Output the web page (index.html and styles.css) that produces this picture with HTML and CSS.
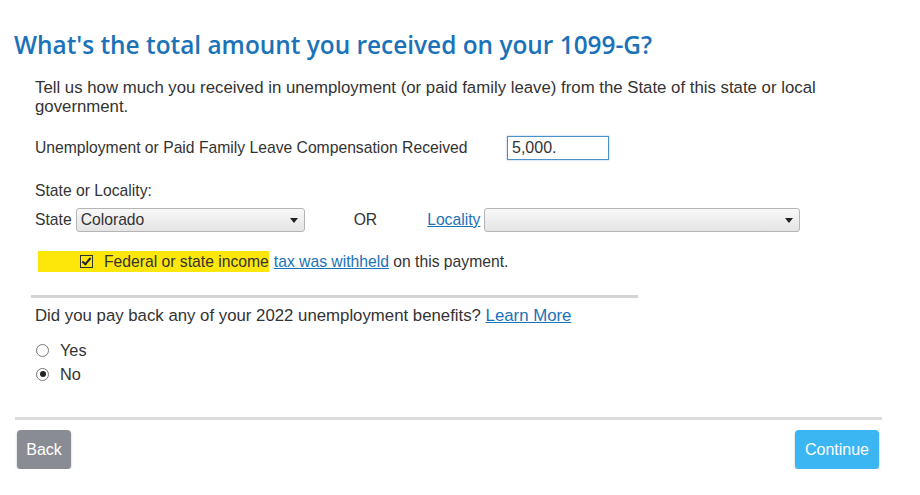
FILE: index.html
```html
<!DOCTYPE html>
<html lang="en">
<head>
    <meta charset="UTF-8">
    <title>1099-G</title>
    <link rel="stylesheet" href="styles.css">
</head>
<body>
<h1 class="title">What's the total amount you received on your 1099-G?</h1>

<div class="form">
    <p class="intro">Tell us how much you received in unemployment (or paid family leave) from the State of this state or local government.</p>

    <div class="amount-row">
        <span class="amount-label">Unemployment or Paid Family Leave Compensation Received</span>
        <input type="text" class="amount-input" value="5,000.">
    </div>

    <div class="loc-label">State or Locality:</div>
    <div class="loc-row">
        <span>State</span>
        <div class="fake-select state-select">Colorado<span class="arrow"></span></div>
        <span class="or">OR</span>
        <a href="#" class="link">Locality</a>
        <div class="fake-select locality-select"><span class="arrow"></span></div>
    </div>

    <div class="withheld-row">
        <span class="highlight"><span class="check"></span>Federal or state income</span>
        <a href="#" class="link">tax was withheld</a>&nbsp;on this payment.
    </div>

    <hr class="rule-short">

    <p class="question">Did you pay back any of your 2022 unemployment benefits? <a href="#" class="link">Learn More</a></p>
    <div class="radios">
        <label class="radio-line"><span class="radio"></span>Yes</label>
        <label class="radio-line"><span class="radio on"></span>No</label>
    </div>
</div>

<hr class="rule-long">

<div class="buttons">
    <button class="btn btn-back">Back</button>
    <button class="btn btn-continue">Continue</button>
</div>
</body>
</html>
```

FILE: styles.css
```css
/* base */
body {
    margin: 0;
    padding: 0;
    font-family: Arial, "Liberation Sans", sans-serif;
    font-size: 15.7px;
    color: #333;
    background: #fff;
    width: 920px;
}
.title {
    font-family: "Open Sans", sans-serif;
    font-weight: 600;
    font-size: 24.4px;
    color: #1a72b8;
    margin: 0;
    padding: 28px 0 0 14px;
    line-height: 33px;
}

/* form */
.form {
    padding: 0 0 0 35px;
}
.intro {
    margin: 17px 0 0 0;
    width: 820px;
    font-size: 16.8px;
    line-height: 19px;
}
.amount-row {
    display: flex;
    align-items: center;
    margin-top: 20px;
    height: 24px;
}
.amount-label {
    width: 472px;
    white-space: nowrap;
}
.amount-input {
    box-sizing: border-box;
    width: 102px;
    height: 24px;
    padding: 1px 4px;
    border: 1px solid #4d90c8;
    box-shadow: 0 0 2px #9cc3e6;
    font-family: inherit;
    font-size: 16px;
    color: #333;
    outline: none;
}
.loc-label {
    margin-top: 21px;
    line-height: 19px;
}
.loc-row {
    display: flex;
    align-items: center;
    margin-top: 8px;
    height: 24px;
}
.fake-select {
    position: relative;
    box-sizing: border-box;
    height: 24px;
    border: 1px solid #b5b5b5;
    border-radius: 3px;
    background: linear-gradient(#f8f8f8, #e4e4e4);
    line-height: 22px;
    padding-left: 4px;
    color: #333;
}
.state-select {
    width: 229px;
    margin-left: 4px;
}
.locality-select {
    width: 316px;
    margin-left: 4px;
}
.arrow {
    position: absolute;
    right: 6px;
    top: 9px;
    border-left: 4px solid transparent;
    border-right: 4px solid transparent;
    border-top: 5px solid #222;
}
.or {
    margin-left: 49px;
    margin-right: 50px;
}
.link {
    color: #1a72b8;
    text-decoration: underline;
}

/* withheld checkbox */
.withheld-row {
    display: flex;
    align-items: center;
    margin-top: 19px;
    margin-left: 3px;
    height: 21px;
    white-space: nowrap;
}
.highlight {
    display: flex;
    align-items: center;
    background: #fde70a;
    height: 21px;
    padding-left: 42px;
    margin-right: 5px;
}
.check {
    position: relative;
    width: 11px;
    height: 11px;
    border: 1px solid #333;
    margin-right: 11px;
    background: #fde70a;
}
.check::after {
    content: "";
    position: absolute;
    left: 3px;
    top: 0;
    width: 3px;
    height: 7px;
    border-right: 2px solid #222;
    border-bottom: 2px solid #222;
    transform: rotate(40deg);
}

/* rules */
.rule-short {
    margin: 23px 0 0 -4px;
    width: 607px;
    height: 3px;
    border: none;
    background: #d4d4d4;
}
.question {
    margin: 8px 0 0 0;
    font-size: 16.8px;
    line-height: 20px;
}
.radios {
    margin-top: 12px;
}
.radio-line {
    display: flex;
    align-items: center;
    height: 24px;
    font-size: 16.3px;
}
.radio {
    position: relative;
    width: 11px;
    height: 11px;
    border: 1px solid #777;
    border-radius: 50%;
    margin-right: 11px;
    margin-left: 1px;
}
.radio.on::after {
    content: "";
    position: absolute;
    left: 2.5px;
    top: 2.5px;
    width: 6px;
    height: 6px;
    border-radius: 50%;
    background: #222;
}
.rule-long {
    margin: 31px 0 0 15px;
    width: 867px;
    height: 3px;
    border: none;
    background: #dcdcdc;
}

/* buttons */
.buttons {
    display: flex;
    justify-content: space-between;
    padding: 10px 41px 0 17px;
}
.btn {
    height: 39px;
    border: none;
    border-radius: 4px;
    color: #fff;
    font-family: Arial, "Liberation Sans", sans-serif;
    font-size: 16px;
    box-shadow: 0 1px 2px rgba(0, 0, 0, 0.3);
}
.btn-back {
    width: 54px;
    background: #8a8c93;
}
.btn-continue {
    width: 84px;
    background: #3bb6f2;
}
```
